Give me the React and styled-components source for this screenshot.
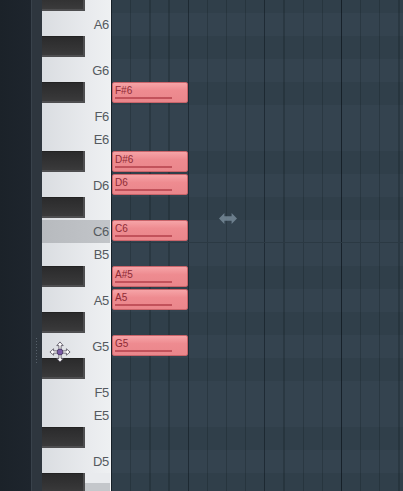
import React from 'react'
import styled, { createGlobalStyle } from 'styled-components'

const GlobalStyle = createGlobalStyle`
  html, body {
    margin: 0;
    padding: 0;
    background: #1c232b;
    overflow: hidden;
  }
  body {
    font-family: "Liberation Sans", Arial, sans-serif;
  }
`

const NAMES = ['B', 'A#', 'A', 'G#', 'G', 'F#', 'F', 'E', 'D#', 'D', 'C#', 'C']

// A#6 down to C#5, the rows that show in the view
const rows = []
for (let oct = 6; oct >= 5; oct--) {
  NAMES.forEach((n) => rows.push({ name: n + oct, black: n.includes('#'), c: n === 'C' }))
}
const visible = rows.slice(1, rows.length - 1)
const last = visible[visible.length - 1].name

const notes = ['F#6', 'D#6', 'D6', 'C6', 'A#5', 'A5', 'G5']

const ROW = 23

export default function App() {
  return (
    <>
      <GlobalStyle />
      <Roll>
        <Side />
        <Rail>
          <DragDots />
        </Rail>
        <Keys>
          {visible.map((r) => (
            <KeyRow key={r.name} $c={r.c} $cBelow={r.name === last}>
              {r.black ? <BlackKey /> : <KeyLabel>{r.name}</KeyLabel>}
            </KeyRow>
          ))}
          <MoveCursor viewBox="0 0 24 24">
            <path
              d="M12 1 L15.5 5 L13.2 5 L13.2 10.8 L19 10.8 L19 8.5 L23 12 L19 15.5 L19 13.2 L13.2 13.2 L13.2 19 L15.5 19 L12 23 L8.5 19 L10.8 19 L10.8 13.2 L5 13.2 L5 15.5 L1 12 L5 8.5 L5 10.8 L10.8 10.8 L10.8 5 L8.5 5 Z"
              fill="#ffffff"
              stroke="#55505e"
              strokeWidth="0.9"
            />
            <circle cx="12" cy="12" r="3.2" fill="#7a5aa6" stroke="#3d2f55" strokeWidth="0.8" />
          </MoveCursor>
        </Keys>
        <Grid>
          {visible.map((r) => (
            <Lane key={r.name} $black={r.black} $c={r.c}>
              {notes.includes(r.name) && (
                <Note>
                  <NoteName>{r.name}</NoteName>
                  <Velocity />
                </Note>
              )}
            </Lane>
          ))}
          <ResizeCursor viewBox="0 0 20 12">
            <path d="M0 6 L6 0 L6 3.5 L14 3.5 L14 0 L20 6 L14 12 L14 8.5 L6 8.5 L6 12 Z" fill="#7f93a2" opacity="0.75" />
          </ResizeCursor>
        </Grid>
      </Roll>
    </>
  )
}

const Roll = styled.div`
  display: flex;
  align-items: flex-start;
  width: 403px;
  height: 491px;
  overflow: hidden;
  position: relative;
`

const Side = styled.div`
  width: 31px;
  height: 491px;
  flex: none;
  background: linear-gradient(to right, #1b2229, #1e252d);
`

const Rail = styled.div`
  position: relative;
  width: 10px;
  height: 491px;
  flex: none;
  background: #2e363e;
  border-left: 1px solid #39424b;
`

const DragDots = styled.div`
  position: absolute;
  left: 4px;
  top: 338px;
  width: 1px;
  height: 26px;
  background: repeating-linear-gradient(to bottom, #56606a 0 1px, transparent 1px 3px);
`

const Keys = styled.div`
  position: relative;
  width: 68px;
  flex: none;
  margin-top: -10px;
  display: flex;
  flex-direction: column;
  border-right: 1px solid #f4f5f6;
`

const KeyRow = styled.div`
  height: ${ROW}px;
  display: flex;
  align-items: flex-start;
  justify-content: space-between;
  background: ${(p) =>
    p.$c
      ? 'linear-gradient(to right, #b7babe, #c2c5c9)'
      : p.$cBelow
      ? 'linear-gradient(to bottom, #e9ebee 0 10px, #c4c7cb 10px)'
      : 'linear-gradient(to right, #dadde1, #e9ebee 70%, #eef0f2)'};
`

const BlackKey = styled.div`
  width: 43px;
  height: 21px;
  background: linear-gradient(to bottom, #2a2a2b, #363637 70%, #3d3d3e);
  box-shadow: inset -2px -2px 0 #4e4e50, inset 0 1px 0 #222;
`

const KeyLabel = styled.span`
  margin-left: auto;
  padding-right: 1px;
  height: ${ROW}px;
  line-height: ${ROW}px;
  font-size: 13px;
  color: #555a5f;
  letter-spacing: -0.3px;
`

const MoveCursor = styled.svg`
  position: absolute;
  left: 7px;
  top: 351px;
  width: 22px;
  height: 22px;
`

const Grid = styled.div`
  position: relative;
  flex: 1;
  height: 501px;
  margin-top: -10px;
  display: flex;
  flex-direction: column;
  background-color: #34434f;
  background-image:
    repeating-linear-gradient(to right, #17212a 0 1px, transparent 1px 229.92px),
    repeating-linear-gradient(to right, #1f2b35 0 1px, transparent 1px 76.64px),
    repeating-linear-gradient(to right, #2a3842 0 1.2px, transparent 1.2px 19.16px);
  background-position: 0 0;
`

const Lane = styled.div`
  height: ${ROW}px;
  flex: none;
  box-sizing: border-box;
  background: ${(p) => (p.$black ? 'rgba(10, 20, 30, 0.08)' : 'transparent')};
  border-bottom: ${(p) => (p.$c ? '1px solid #2b3943' : 'none')};
  padding-left: 1px;
`

const Note = styled.div`
  position: relative;
  width: 76px;
  height: 21px;
  box-sizing: border-box;
  border: 1px solid #c9646a;
  border-radius: 2px;
  background: linear-gradient(to bottom, #f6a4a7, #ee8b90 40%, #ea868b);
  padding: 2px 0 0 2px;
`

const NoteName = styled.div`
  font-size: 10px;
  line-height: 11px;
  color: #8e2b35;
`

const Velocity = styled.div`
  position: absolute;
  left: 2px;
  bottom: 3px;
  width: 57px;
  height: 2px;
  background: #c2525b;
`

const ResizeCursor = styled.svg`
  position: absolute;
  left: 108px;
  top: 223px;
  width: 18px;
  height: 11px;
`
